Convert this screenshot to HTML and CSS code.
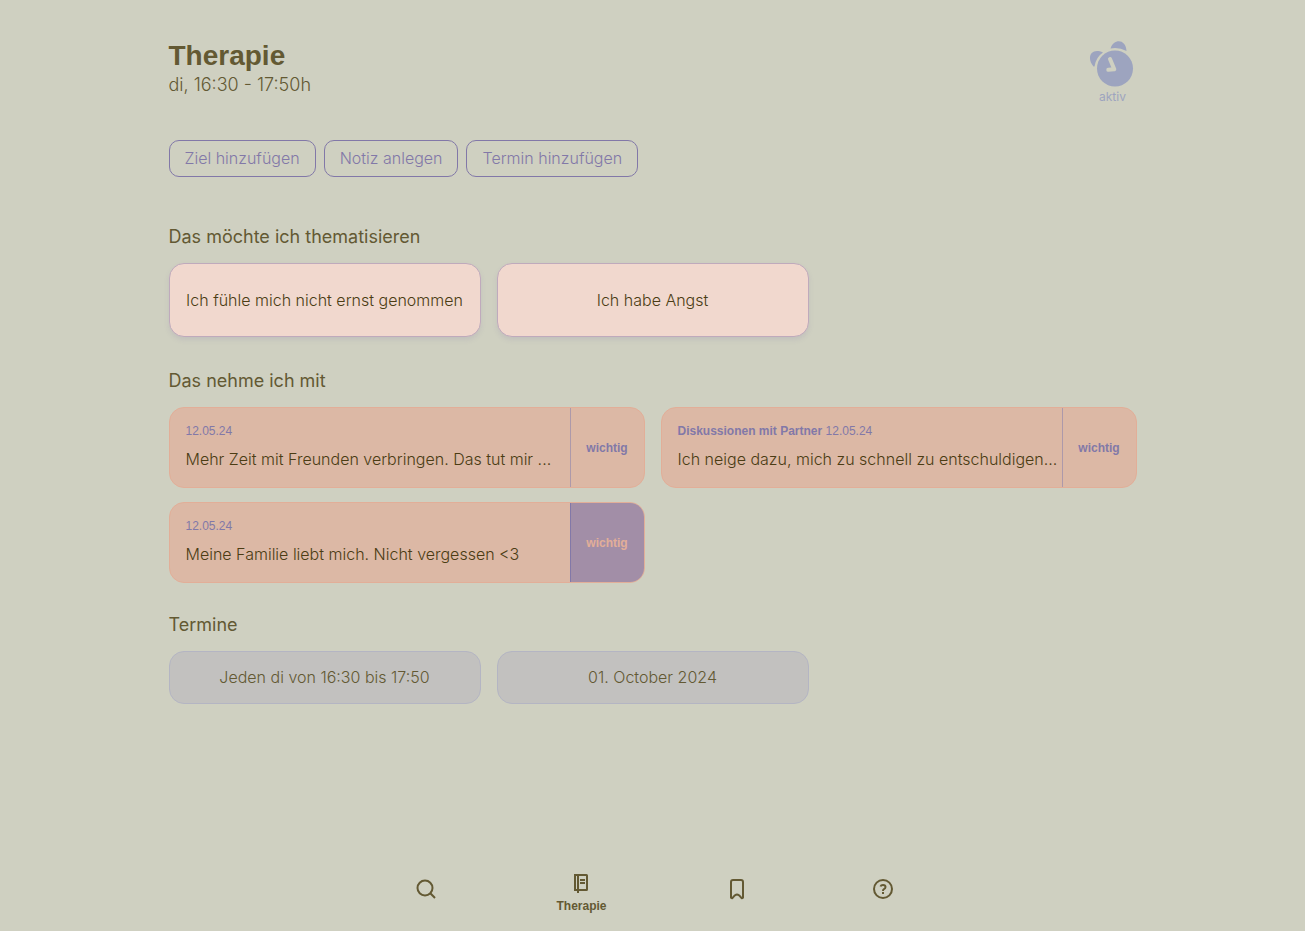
FILE: index.html
```html
<!DOCTYPE html>
<html lang="de">
<head>
<meta charset="utf-8">
<meta name="viewport" content="width=device-width, initial-scale=1">
<title>Therapie</title>
<link rel="stylesheet" href="styles.css">
</head>
<body>
<main class="page">
  <header class="header">
    <div>
      <h1 class="title">Therapie</h1>
      <p class="subtitle">di, 16:30 - 17:50h</p>
    </div>
    <button class="alarm" type="button">
      <svg width="48" height="50" viewBox="0 0 48 50" aria-hidden="true">
        <circle cx="26" cy="29.5" r="18" fill="currentColor"/>
        <path d="M4.5 27.5C-3 19 2 8 14 13.500Q7 18 5.500 27.500Z" fill="currentColor"/>
        <path d="M21.500 9.500C25-1 37 0 37.500 12Q30 8 21.500 9.500Z" fill="currentColor"/>
        <path d="M21 20L25.300 30.300L19.300 30.800" fill="none" stroke="#cfd0c1" stroke-width="4" stroke-linecap="round" stroke-linejoin="round"/>
      </svg>
      <span>aktiv</span>
    </button>
  </header>

  <div class="actions">
    <button class="action" type="button">Ziel hinzufügen</button>
    <button class="action" type="button">Notiz anlegen</button>
    <button class="action" type="button">Termin hinzufügen</button>
  </div>

  <section class="section">
    <h2 class="heading">Das möchte ich thematisieren</h2>
    <div class="thirds">
      <button class="topic" type="button">Ich fühle mich nicht ernst genommen</button>
      <button class="topic" type="button">Ich habe Angst</button>
    </div>
  </section>

  <section class="section">
    <h2 class="heading">Das nehme ich mit</h2>
    <div class="halves">
      <article class="note">
        <div class="note-body">
          <p class="note-meta">12.05.24</p>
          <p class="note-text">Mehr Zeit mit Freunden verbringen. Das tut mir ...</p>
        </div>
        <button class="flag" type="button">wichtig</button>
      </article>
      <article class="note">
        <div class="note-body">
          <p class="note-meta"><b>Diskussionen mit Partner</b> 12.05.24</p>
          <p class="note-text">Ich neige dazu, mich zu schnell zu entschuldigen...</p>
        </div>
        <button class="flag" type="button">wichtig</button>
      </article>
      <article class="note">
        <div class="note-body">
          <p class="note-meta">12.05.24</p>
          <p class="note-text">Meine Familie liebt mich. Nicht vergessen &lt;3</p>
        </div>
        <button class="flag flag-on" type="button" aria-pressed="true">wichtig</button>
      </article>
    </div>
  </section>

  <section class="section section-dates">
    <h2 class="heading">Termine</h2>
    <div class="thirds">
      <button class="date" type="button">Jeden di von 16:30 bis 17:50</button>
      <button class="date" type="button">01. October 2024</button>
    </div>
  </section>
</main>

<nav class="nav">
  <a class="nav-item" href="#suche" aria-label="Suche">
    <svg width="24" height="24" viewBox="0 0 24 24" fill="none" stroke="currentColor" stroke-width="2" aria-hidden="true"><circle cx="11" cy="11" r="7.500"/><path d="M16.300 16.300L21 21"/></svg>
  </a>
  <a class="nav-item" href="#therapie" aria-current="page">
    <svg width="24" height="24" viewBox="0 0 24 24" fill="none" stroke="currentColor" stroke-width="2" aria-hidden="true"><path d="M6 20V4H17.500Q18 4 18 4.500V18.500Q18 19 17.500 19H5M9 4V22M11 9H16M11 12H16"/></svg>
    <span>Therapie</span>
  </a>
  <a class="nav-item" href="#merkliste" aria-label="Merkliste">
    <svg width="24" height="24" viewBox="0 0 24 24" fill="none" stroke="currentColor" stroke-width="2" stroke-linejoin="round" aria-hidden="true"><path d="M6 5Q6 3 8 3H16Q18 3 18 5V20.500Q17.500 21.500 16.500 21Q14 17.500 12 17.500T7.500 21Q6.500 21.500 6 20.500Z"/></svg>
  </a>
  <a class="nav-item" href="#hilfe" aria-label="Hilfe">
    <svg width="24" height="24" viewBox="0 0 24 24" fill="none" stroke="currentColor" stroke-width="2" aria-hidden="true"><circle cx="12" cy="12" r="9"/><path d="M9.500 9.500Q10 8 12 8Q14.500 8 14.500 10Q14.500 11.500 13 12.200Q12 12.700 12 14M12 15V17"/></svg>
  </a>
</nav>
</body>
</html>
```
FILE: styles.css
```css
* { box-sizing: border-box; }
body {
  margin: 0;
  min-height: 100vh;
  display: flex;
  flex-direction: column;
  background: #cfd0c1;
  color: #635933;
  font-family: Inter, "Liberation Sans", sans-serif;
  font-size: 16px;
  font-weight: 300;
  line-height: 24px;
}
h1, h2, p { margin: 0; font-weight: inherit; }
button {
  margin: 0;
  padding: 0;
  border: 0;
  background: none;
  color: inherit;
  font: inherit;
  cursor: pointer;
}
.page {
  flex: 1;
  width: 100%;
  max-width: 1000px;
  margin: 0 auto;
  padding: 39px 16px 16px;
}
.header {
  display: flex;
  justify-content: space-between;
  align-items: flex-start;
  min-height: 69px;
}
.title,
.note-meta,
.flag,
.nav-item {
  font-family: "Liberation Sans", Arial, sans-serif;
}
.title {
  font-size: 28px;
  font-weight: 700;
  line-height: 34px;
}
.subtitle {
  font-size: 18px;
  line-height: 24px;
}
.alarm {
  display: flex;
  flex-direction: column;
  align-items: center;
  color: #9da4bf;
  font-size: 12px;
  font-weight: 400;
  line-height: 16px;
}
.actions {
  display: flex;
  flex-wrap: wrap;
  gap: 8px;
  margin-top: 32px;
}
.action {
  padding: 6px 15px;
  border: 1px solid #8278a8;
  border-radius: 10px;
  color: #8278a8;
  line-height: 23px;
}
.section { margin-top: 31px; }
.actions + .section { margin-top: 47px; }
.section-dates { margin-top: 29px; }
.heading {
  margin-bottom: 13px;
  font-size: 18px;
  font-weight: 400;
  line-height: 26px;
}
.thirds {
  display: grid;
  grid-template-columns: repeat(3, 1fr);
  gap: 16px;
}
.halves {
  display: grid;
  grid-template-columns: repeat(2, 1fr);
  gap: 14px 16px;
}
.topic {
  padding: 24px 16px;
  border: 1px solid #bfaabc;
  border-radius: 15px;
  background: #f1d8ce;
  box-shadow: 0 3px 5px rgba(130, 120, 168, 0.16);
  color: #4b3c14;
}
.note {
  display: flex;
  overflow: hidden;
  border: 1px solid #e2ae98;
  border-radius: 15px;
  background: #dcb8a5;
}
.note-body {
  flex: 1;
  min-width: 0;
  padding: 15px 4px 16px 16px;
}
.note-meta {
  margin-bottom: 8px;
  color: #8278a8;
  font-size: 12px;
  font-weight: 400;
  line-height: 16px;
}
.note-meta b { font-weight: 700; }
.note-text {
  overflow: hidden;
  color: #4b3c14;
  text-overflow: ellipsis;
  white-space: nowrap;
}
.flag {
  width: 74px;
  border-left: 1px solid #ad99aa;
  color: #8278a8;
  font-size: 12px;
  font-weight: 700;
}
.flag-on {
  border-color: #8278a8;
  background: #a28ea7;
  color: #e2ae98;
}
.date {
  padding: 14px 16px;
  border: 1px solid #b4b5c3;
  border-radius: 15px;
  background: #c2c1bf;
  line-height: 23px;
}
.nav {
  display: flex;
  justify-content: center;
  align-items: center;
  gap: 114px;
  padding: 0 0 16px 4px;
}
.nav-item {
  display: flex;
  flex-direction: column;
  align-items: center;
  min-width: 32px;
  padding-bottom: 8px;
  color: #635933;
  font-size: 12px;
  font-weight: 700;
  line-height: 18px;
  text-decoration: none;
}
.nav-item[aria-current] { padding-bottom: 0; }
.nav-item svg, .alarm svg { display: block; }
.nav-item span { margin-top: 2px; }
```
